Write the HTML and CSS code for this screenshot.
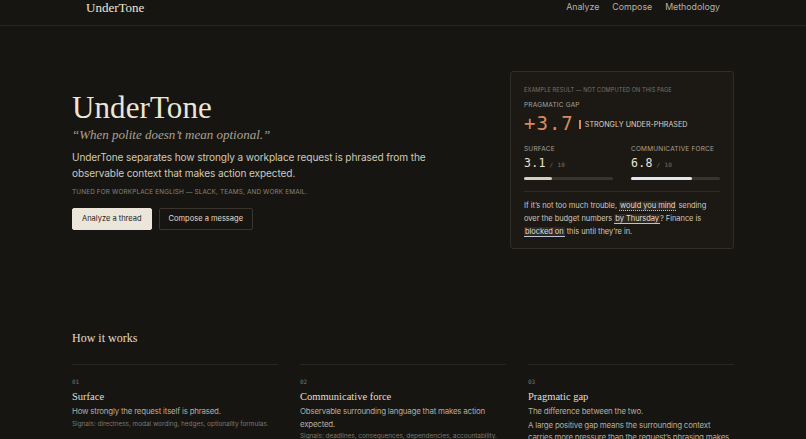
FILE: index.html
```html
<!DOCTYPE html>
<html lang="en">
<head>
<meta charset="utf-8">
<title>UnderTone</title>
<link rel="stylesheet" href="styles.css">
</head>
<body>
<header class="topbar">
  <div class="topbar-inner">
    <span class="logo">UnderTone</span>
    <nav class="nav">
      <a href="#">Analyze</a>
      <a href="#">Compose</a>
      <a href="#">Methodology</a>
    </nav>
  </div>
</header>
<main class="page">
  <section class="hero">
    <div class="hero-text">
      <h1 class="title">UnderTone</h1>
      <p class="tagline">“When polite doesn’t mean optional.”</p>
      <p class="lede">UnderTone separates how strongly a workplace request is phrased from the observable context that makes action expected.</p>
      <p class="tuned">Tuned for workplace English — Slack, Teams, and work email.</p>
      <div class="actions">
        <a class="btn btn-primary" href="#">Analyze a thread</a>
        <a class="btn btn-ghost" href="#">Compose a message</a>
      </div>
    </div>
    <aside class="card">
      <p class="card-note">Example result — not computed on this page</p>
      <p class="label label-gap">Pragmatic gap</p>
      <div class="gap-row">
        <span class="gap-value">+3.7</span>
        <span class="gap-tag">Strongly under-phrased</span>
      </div>
      <div class="scores">
        <div class="score">
          <p class="label">Surface</p>
          <p class="score-num">3.1<span class="score-max"> / 10</span></p>
          <div class="track"><div class="fill fill-surface" style="width:31%"></div></div>
        </div>
        <div class="score">
          <p class="label">Communicative force</p>
          <p class="score-num">6.8<span class="score-max"> / 10</span></p>
          <div class="track"><div class="fill fill-force" style="width:68%"></div></div>
        </div>
      </div>
      <p class="sample">If it’s not too much trouble, <span class="hl hl-dotted">would you mind</span> sending over the budget numbers <span class="hl hl-solid">by Thursday</span>? Finance is <span class="hl hl-solid">blocked on</span> this until they’re in.</p>
    </aside>
  </section>

  <section class="how">
    <h2 class="how-title">How it works</h2>
    <div class="steps">
      <div class="step">
        <p class="step-num">01</p>
        <h3 class="step-title">Surface</h3>
        <p class="step-desc">How strongly the request itself is phrased.</p>
        <p class="step-sig">Signals: directness, modal wording, hedges, optionality formulas.</p>
      </div>
      <div class="step">
        <p class="step-num">02</p>
        <h3 class="step-title">Communicative force</h3>
        <p class="step-desc">Observable surrounding language that makes action expected.</p>
        <p class="step-sig">Signals: deadlines, consequences, dependencies, accountability.</p>
      </div>
      <div class="step">
        <p class="step-num">03</p>
        <h3 class="step-title">Pragmatic gap</h3>
        <p class="step-desc">The difference between the two.</p>
        <p class="step-desc step-desc-gap">A large positive gap means the surrounding context carries more pressure than the request’s phrasing makes explicit.</p>
      </div>
    </div>
  </section>
</main>
</body>
</html>
```

FILE: styles.css
```css
* { box-sizing: border-box; }
html, body { margin: 0; padding: 0; }
body {
  background: #171511;
  color: #e9e3d6;
  font-family: Inter, "Liberation Sans", sans-serif;
  overflow: hidden;
  height: 439px;
}
p, h1, h2, h3 { margin: 0; }
a { text-decoration: none; color: inherit; }

.topbar {
  border-bottom: 1px solid #2a2722;
  height: 26px;
}
.topbar-inner {
  width: 662px;
  margin-left: 72px;
  padding: 0 14px;
  height: 25px;
  display: flex;
  justify-content: space-between;
  align-items: flex-start;
}
.logo {
  font-family: "Liberation Serif", serif;
  font-size: 13px;
  line-height: 16px;
  color: #ece6da;
}
.nav {
  display: flex;
  gap: 13px;
  font-size: 8.8px;
  line-height: 14px;
  color: #b8b1a4;
}

.page {
  width: 662px;
  margin-left: 72px;
}
.hero {
  display: flex;
  justify-content: space-between;
  align-items: center;
  padding-top: 45px;
}
.hero-text { width: 400px; }
.title {
  font-family: "Liberation Serif", serif;
  font-weight: 400;
  font-size: 31px;
  line-height: 34px;
  color: #ece6da;
  letter-spacing: 0.1px;
}
.tagline {
  font-family: "Liberation Serif", serif;
  font-style: italic;
  font-size: 13px;
  color: #a9a296;
  margin-top: 1px;
  line-height: 18px;
}
.lede {
  font-size: 10.1px;
  letter-spacing: -0.12px;
  line-height: 16px;
  color: #cfc8ba;
  margin-top: 5px;
}
.tuned {
  font-size: 6.4px;
  line-height: 9px;
  letter-spacing: 0.15px;
  text-transform: uppercase;
  color: #8a8377;
  margin-top: 7px;
}
.actions {
  display: flex;
  gap: 7px;
  margin-top: 11px;
}
.btn {
  display: inline-flex;
  align-items: center;
  height: 22px;
  padding: 0 9px;
  font-size: 7.5px;
  border-radius: 2px;
}
.btn-primary {
  background: #ece6da;
  color: #1d1a16;
  border: 1px solid #ece6da;
}
.btn-ghost {
  border: 1px solid #3a362f;
  color: #e3ddd0;
}

.card {
  width: 224px;
  height: 178px;
  border: 1px solid #302c26;
  background: #1c1915;
  border-radius: 3px;
  padding: 13px 13px 0 13px;
}
.card-note {
  font-size: 5.6px;
  line-height: 8px;
  text-transform: uppercase;
  color: #7a7367;
  letter-spacing: 0.1px;
  margin-top: 1px;
}
.label {
  font-size: 6.5px;
  line-height: 8px;
  text-transform: uppercase;
  color: #a7a094;
  letter-spacing: 0.2px;
}
.label-gap { margin-top: 7px; }
.gap-row {
  display: flex;
  align-items: center;
  margin-top: 3px;
  height: 22px;
}
.gap-value {
  font-family: "DejaVu Sans Mono", "Liberation Mono", monospace;
  font-size: 19px;
  color: #d98a5e;
  letter-spacing: 1px;
  line-height: 22px;
}
.gap-tag {
  font-size: 7.2px;
  text-transform: uppercase;
  color: #d9d2c4;
  border-left: 2px solid #d98a5e;
  padding-left: 4px;
  margin-left: 5px;
  line-height: 9px;
  margin-top: 3px;
}
.scores {
  display: grid;
  grid-template-columns: 1fr 1fr;
  gap: 18px;
  margin-top: 11px;
  padding-bottom: 11px;
  border-bottom: 1px solid #2e2a24;
}
.score-num {
  font-family: "DejaVu Sans Mono", "Liberation Mono", monospace;
  font-size: 11.5px;
  line-height: 12px;
  color: #e9e3d6;
  margin-top: 4px;
  letter-spacing: 0.3px;
}
.score-max {
  font-size: 6px;
  color: #7a7367;
}
.track {
  height: 3px;
  background: #38342d;
  margin-top: 6px;
  border-radius: 2px;
}
.fill { height: 3px; border-radius: 2px; }
.fill-surface { background: #d7cfbd; }
.fill-force { background: #e1e5f2; }
.sample {
  font-size: 7.5px;
  letter-spacing: -0.05px;
  line-height: 13px;
  color: #cfc8ba;
  margin-top: 7px;
}
.hl {
  background: #2c2924;
  padding: 0 1px;
  color: #e3ddd0;
}
.hl-dotted { border-bottom: 1px dotted #c8c0b0; }
.hl-solid { border-bottom: 1px solid #b9c2d8; }

.how { padding-top: 82px; }
.how-title {
  font-family: "Liberation Serif", serif;
  font-weight: 400;
  font-size: 12px;
  line-height: 14px;
  color: #e3ddd0;
}
.steps {
  display: grid;
  grid-template-columns: repeat(3, 1fr);
  gap: 22px;
  margin-top: 19px;
}
.step {
  border-top: 1px solid #2a2722;
  padding-top: 13px;
}
.step-num {
  font-family: "DejaVu Sans Mono", "Liberation Mono", monospace;
  font-size: 6px;
  line-height: 8px;
  color: #7a7367;
}
.step-title {
  font-family: "Liberation Serif", serif;
  font-weight: 400;
  font-size: 10.5px;
  line-height: 13px;
  color: #e3ddd0;
  margin-top: 4px;
}
.step-desc {
  font-size: 7.9px;
  letter-spacing: -0.2px;
  line-height: 12.5px;
  color: #b3ac9f;
  margin-top: 2px;
}
.step-desc-gap { margin-top: 1px; }
.step-sig {
  font-size: 6.5px;
  letter-spacing: -0.05px;
  line-height: 10px;
  color: #7e776b;
  margin-top: 1px;
}
```
